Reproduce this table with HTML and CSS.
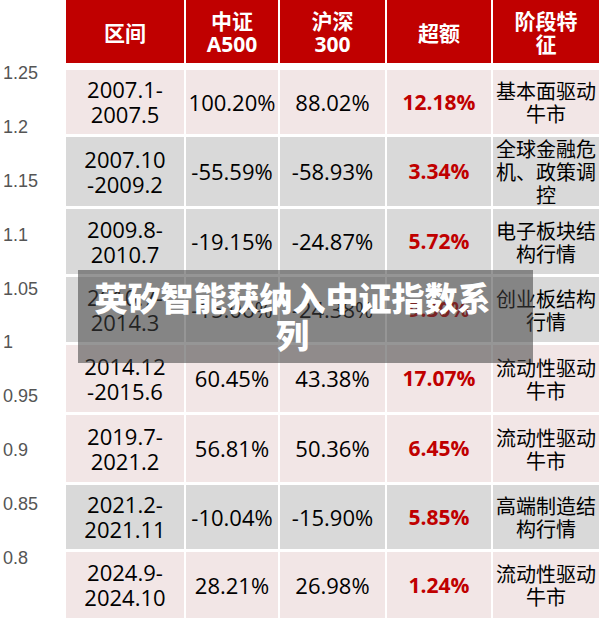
FILE: index.html
```html
<!DOCTYPE html>
<html lang="zh">
<head>
<meta charset="utf-8">
<title>中证A500 区间表现</title>
<link rel="stylesheet" href="styles.css">
</head>
<body>
<div class="page">
  <div class="axis">
    <div class="tick">1.25</div>
    <div class="tick">1.2</div>
    <div class="tick">1.15</div>
    <div class="tick">1.1</div>
    <div class="tick">1.05</div>
    <div class="tick">1</div>
    <div class="tick">0.95</div>
    <div class="tick">0.9</div>
    <div class="tick">0.85</div>
    <div class="tick">0.8</div>
  </div>
  <div class="table">
    <div class="th">区间</div>
    <div class="th">中证<br>A500</div>
    <div class="th">沪深<br>300</div>
    <div class="th">超额</div>
    <div class="th">阶段特<br>征</div>

    <div class="td pink">2007.1-<br>2007.5</div>
    <div class="td pink">100.20%</div>
    <div class="td pink">88.02%</div>
    <div class="td pink red">12.18%</div>
    <div class="td pink note">基本面驱动<br>牛市</div>

    <div class="td gray">2007.10<br>-2009.2</div>
    <div class="td gray">-55.59%</div>
    <div class="td gray">-58.93%</div>
    <div class="td gray red">3.34%</div>
    <div class="td gray note">全球金融危<br>机、政策调<br>控</div>

    <div class="td gray">2009.8-<br>2010.7</div>
    <div class="td gray">-19.15%</div>
    <div class="td gray">-24.87%</div>
    <div class="td gray red">5.72%</div>
    <div class="td gray note">电子板块结<br>构行情</div>

    <div class="td gray">2010.7-<br>2014.3</div>
    <div class="td gray">-15.06%</div>
    <div class="td gray">-24.38%</div>
    <div class="td gray red">9.30%</div>
    <div class="td gray note">创业板结构<br>行情</div>

    <div class="td pink">2014.12<br>-2015.6</div>
    <div class="td pink">60.45%</div>
    <div class="td pink">43.38%</div>
    <div class="td pink red">17.07%</div>
    <div class="td pink note">流动性驱动<br>牛市</div>

    <div class="td pink">2019.7-<br>2021.2</div>
    <div class="td pink">56.81%</div>
    <div class="td pink">50.36%</div>
    <div class="td pink red">6.45%</div>
    <div class="td pink note">流动性驱动<br>牛市</div>

    <div class="td gray">2021.2-<br>2021.11</div>
    <div class="td gray">-10.04%</div>
    <div class="td gray">-15.90%</div>
    <div class="td gray red">5.85%</div>
    <div class="td gray note">高端制造结<br>构行情</div>

    <div class="td pink">2024.9-<br>2024.10</div>
    <div class="td pink">28.21%</div>
    <div class="td pink">26.98%</div>
    <div class="td pink red">1.24%</div>
    <div class="td pink note">流动性驱动<br>牛市</div>
  </div>
  <div class="banner">英矽智能获纳入中证指数系列</div>
</div>
</body>
</html>
```

FILE: styles.css
```css
* { box-sizing: border-box; }

html, body {
  margin: 0;
  padding: 0;
  background: #ffffff;
}

.page {
  position: relative;
  display: flex;
  width: 613px;
  height: 634px;
  font-family: "Open Sans", "Noto Sans CJK SC", sans-serif;
  color: #000;
}

.axis {
  width: 66px;
  padding-top: 47px;
  padding-left: 3px;
  display: flex;
  flex-direction: column;
}

.tick {
  height: 53.8px;
  display: flex;
  align-items: center;
  font-family: "Liberation Sans", Arial, sans-serif;
  font-size: 18px;
  color: #555555;
}

.table {
  display: grid;
  grid-template-columns: 118px 92px 105px 104px 106px;
  grid-template-rows: 67px 64px 69px 65px 65px 67px 67px 64px 66px;
  column-gap: 2px;
  row-gap: 3px;
  align-self: flex-start;
}

.th {
  height: 63px;
  background: #c00000;
  color: #ffffff;
  font-weight: 700;
  font-size: 21px;
  line-height: 23px;
  padding-top: 3px;
  display: flex;
  align-items: center;
  justify-content: center;
  text-align: center;
  white-space: nowrap;
}

.td {
  display: flex;
  align-items: center;
  justify-content: center;
  text-align: center;
  font-size: 22px;
  line-height: 25px;
  white-space: nowrap;
}

.pink { background: #f2e6e6; }
.gray { background: #d9d9d9; }

.red {
  color: #c00000;
  font-weight: 700;
  font-size: 21px;
}

.note {
  font-family: "Noto Sans CJK SC", sans-serif;
  font-size: 20px;
  line-height: 23px;
}

.banner {
  position: absolute;
  left: 78px;
  top: 270px;
  width: 455px;
  height: 93px;
  padding: 9px 36px 0 10px;
  background: rgba(64, 64, 64, 0.55);
  color: #ffffff;
  font-family: "Noto Sans CJK SC", sans-serif;
  font-weight: 900;
  font-size: 33px;
  line-height: 37px;
  text-align: center;
}
```
